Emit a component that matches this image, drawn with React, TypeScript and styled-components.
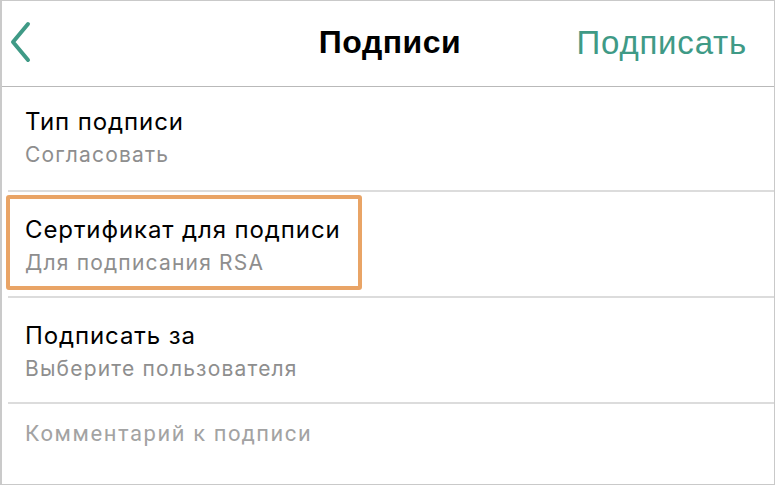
import React from "react";
import styled, { createGlobalStyle } from "styled-components";

interface Field {
  title: string;
  value: string;
  highlighted?: boolean;
}

const fields: Field[] = [
  { title: "Тип подписи", value: "Согласовать" },
  { title: "Сертификат для подписи", value: "Для подписания RSA", highlighted: true },
  { title: "Подписать за", value: "Выберите пользователя" },
];

const GlobalStyle = createGlobalStyle`
  html, body {
    margin: 0;
    padding: 0;
    background: #ffffff;
  }
`;

export default function App() {
  return (
    <>
      <GlobalStyle />
      <Screen>
        <Header>
          <BackButton aria-label="Назад">
            <svg width="22" height="42" viewBox="0 0 22 42" fill="none">
              <polyline
                points="18,3 3,21 18,39"
                stroke="#3f9a86"
                strokeWidth="4"
                strokeLinecap="round"
                strokeLinejoin="round"
              />
            </svg>
          </BackButton>
          <Title>Подписи</Title>
          <Action>Подписать</Action>
        </Header>

        <List>
          {fields.map((f, i) => (
            <Row key={i}>
              {f.highlighted && <Highlight />}
              <RowTitle>{f.title}</RowTitle>
              <RowValue>{f.value}</RowValue>
            </Row>
          ))}
          <Comment>Комментарий к подписи</Comment>
        </List>
      </Screen>
    </>
  );
}

const Screen = styled.div`
  width: 775px;
  height: 485px;
  box-sizing: border-box;
  border: 1px solid #c9c9c9;
  border-left: 2px solid #cacaca;
  background: #ffffff;
  display: flex;
  flex-direction: column;
  overflow: hidden;
`;

const Header = styled.header`
  height: 85px;
  flex-shrink: 0;
  border-bottom: 1px solid #b9b9b9;
  display: grid;
  grid-template-columns: 1fr auto 1fr;
  align-items: center;
  padding: 0 8px 0 12px;
`;

const BackButton = styled.div`
  display: flex;
  align-items: center;
  justify-self: start;
  margin-left: -4px;
  margin-top: -3px;
`;

const Title = styled.div`
  font-family: "Liberation Sans", Arial, sans-serif;
  font-weight: bold;
  font-size: 32px;
  letter-spacing: 0.5px;
  color: #000000;
  margin-top: -2px;
`;

const Action = styled.div`
  justify-self: end;
  margin-right: 19px;
  font-family: "Liberation Sans", Arial, sans-serif;
  font-size: 33px;
  letter-spacing: 0.8px;
  color: #3f9a86;
  margin-top: -2px;
`;

const List = styled.div`
  display: flex;
  flex-direction: column;
`;

const Row = styled.div`
  position: relative;
  margin-left: 6px;
  height: 106px;
  box-sizing: border-box;
  border-bottom: 2px solid #dcdcdc;
  padding: 23px 0 0 17px;
  display: flex;
  flex-direction: column;
  gap: 6px;

  &:first-child {
    height: 105px;
    padding-top: 20px;
  }
`;

const Highlight = styled.div`
  position: absolute;
  left: -2px;
  top: 3px;
  width: 356px;
  height: 95px;
  box-sizing: border-box;
  border: 4px solid #e9a466;
  border-radius: 3px;
`;

const RowTitle = styled.div`
  font-family: Inter, "Liberation Sans", sans-serif;
  font-size: 24px;
  letter-spacing: 0.9px;
  color: #000000;
`;

const RowValue = styled.div`
  font-family: Inter, "Liberation Sans", sans-serif;
  font-size: 21px;
  letter-spacing: 1.2px;
  color: #8e8e8e;
`;

const Comment = styled.div`
  padding: 17px 0 0 23px;
  font-family: Roboto, "Liberation Sans", sans-serif;
  font-size: 22px;
  letter-spacing: 1.6px;
  color: #a3a3a3;
`;
